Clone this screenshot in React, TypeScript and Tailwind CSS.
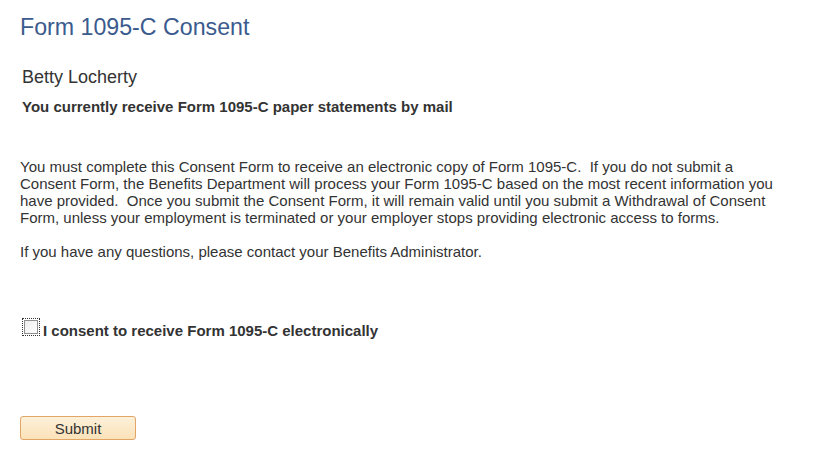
import { useState } from 'react';

const font = { fontFamily: '"Liberation Sans", Arial, sans-serif' };

const introLines = [
  'You must complete this Consent Form to receive an electronic copy of Form 1095-C.\u00a0 If you do not submit a',
  'Consent Form, the Benefits Department will process your Form 1095-C based on the most recent information you',
  'have provided.\u00a0 Once you submit the Consent Form, it will remain valid until you submit a Withdrawal of Consent',
  'Form, unless your employment is terminated or your employer stops providing electronic access to forms.',
];

function ConsentCheckbox({ checked, onChange }: { checked: boolean; onChange: () => void }) {
  return (
    <button
      type="button"
      onClick={onChange}
      className="w-[18px] h-[18px] shrink-0 border border-dotted border-[#333] p-[1px] bg-white"
    >
      <span className="flex h-full w-full items-center justify-center border border-[#8e8f8f] bg-gradient-to-br from-[#ededed] to-white">
        {checked && <span className="text-[11px] leading-none text-[#333]">✓</span>}
      </span>
    </button>
  );
}

export default function App() {
  const [consent, setConsent] = useState(false);

  return (
    <div className="min-h-[459px] bg-white pl-[20px] pt-[13px] text-[#333]" style={font}>
      <h1 className="text-[23.2px] leading-[28px] text-[#3b5a8d]">Form 1095-C Consent</h1>

      <div className="pl-[2px]">
        <p className="mt-[25px] text-[18px] leading-[22px]">Betty Locherty</p>
        <p className="mt-[10px] text-[15px] leading-[17px] font-bold">
          You currently receive Form 1095-C paper statements by mail
        </p>
      </div>

      <div className="mt-[43px] text-[15px] leading-[17px]">
        <p>
          {introLines.map((line) => (
            <span key={line} className="block whitespace-nowrap">
              {line}
            </span>
          ))}
        </p>
        <p className="mt-[17px]">If you have any questions, please contact your Benefits Administrator.</p>
      </div>

      <div className="mt-[58px] flex items-start pl-[2px]">
        <ConsentCheckbox checked={consent} onChange={() => setConsent(!consent)} />
        <span className="mt-[4px] ml-[3px] text-[15px] leading-[17px] font-bold">
          I consent to receive Form 1095-C electronically
        </span>
      </div>

      <button
        type="button"
        className="mt-[77px] flex h-[24px] w-[116px] items-center justify-center rounded-[3px] border border-[#e3a565] bg-gradient-to-b from-[#fdf0da] to-[#fbe2b8] text-[15px] leading-[17px] text-[#333]"
      >
        Submit
      </button>
    </div>
  );
}
